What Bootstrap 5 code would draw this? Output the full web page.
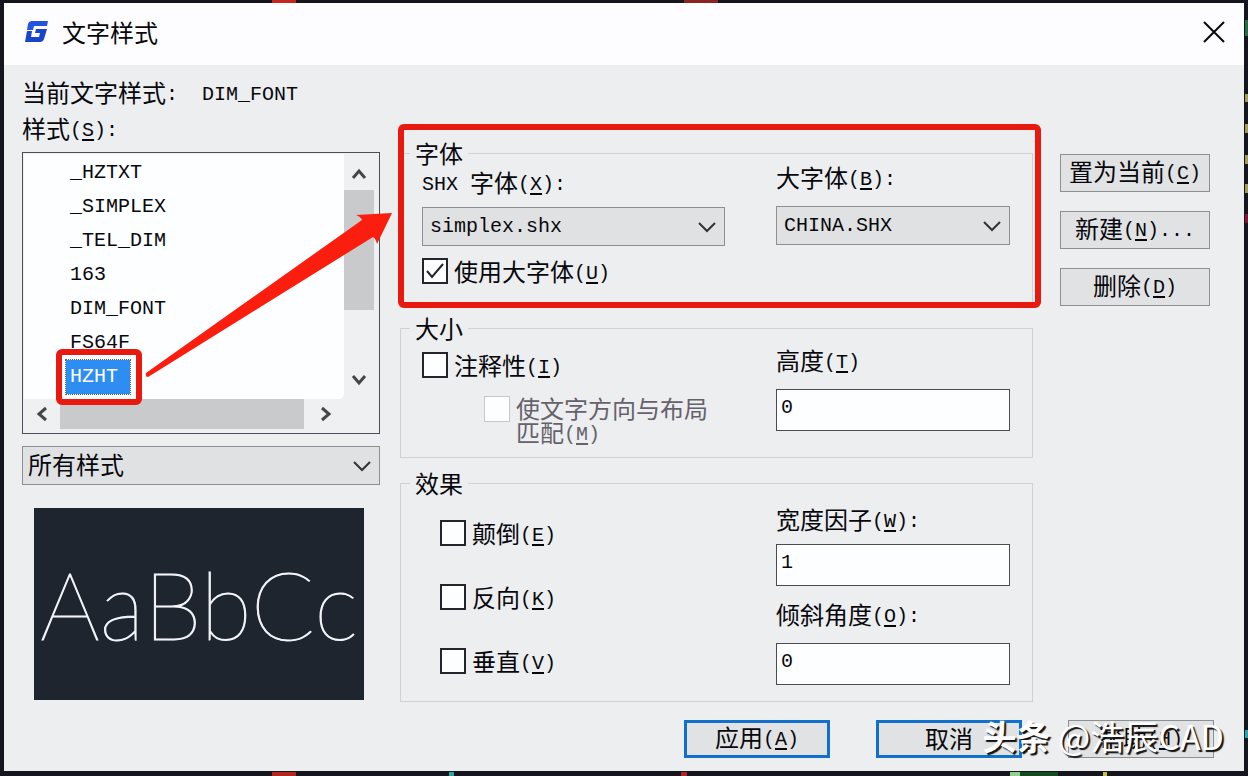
<!DOCTYPE html>
<html lang="zh-CN">
<head>
<meta charset="utf-8">
<meta name="viewport" content="width=device-width, initial-scale=1">
<title>文字样式</title>
<link href="https://cdn.jsdelivr.net/npm/bootstrap@5.3.0/dist/css/bootstrap.min.css" rel="stylesheet">
<style>
:root{--cjk:"Noto Sans CJK SC",sans-serif;--mono:"Liberation Mono","Noto Sans CJK SC",monospace;--mark-red:#e8190f}
body{padding:3px 4px 4px;color:#08080c;font:24px/24px var(--cjk);min-height:100vh;
 background:
 linear-gradient(#c3271f,#c3271f) 272px 0/24px 3px no-repeat,
 linear-gradient(#8b2420,#8b2420) 684px 0/34px 3px no-repeat,
 linear-gradient(#b32521,#b32521) 272px 100%/24px 4px no-repeat,
 linear-gradient(#2aa5a0,#2aa5a0) 449px 100%/5px 4px no-repeat,
 linear-gradient(#b32521,#b32521) 681px 100%/6px 4px no-repeat,
 linear-gradient(#8fd08f,#8fd08f) 1010px 100%/10px 4px no-repeat,
 linear-gradient(#144a22,#144a22) 1020px 100%/38px 4px no-repeat,
 linear-gradient(#c9c03c,#c9c03c) 1103px 100%/4px 4px no-repeat,
 linear-gradient(#2f6a45,#2f6a45) 100% 20px/3px 16px no-repeat,
 linear-gradient(#a59a5d,#a59a5d) 100% 94px/3px 8px no-repeat,
 linear-gradient(#a59a5d,#a59a5d) 100% 124px/3px 9px no-repeat,
 linear-gradient(#a59a5d,#a59a5d) 100% 155px/3px 9px no-repeat,
 linear-gradient(#a59a5d,#a59a5d) 100% 184px/3px 9px no-repeat,
 linear-gradient(#7d1734,#7d1734) 100% 214px/3px 9px no-repeat,
 linear-gradient(#2aa5b0,#2aa5b0) 100% 730px/3px 8px no-repeat,
 #15151d}
.dialog-window{background:#eceef0;min-height:calc(100vh - 8px)}
.title-strip{background:#fdfdff;height:62px;padding:0 18px 4px 20px}
.title-strip span{margin-left:12px}
.close-x{width:24px;height:24px;border:0;padding:0;background:none;display:flex}
.lat{font:20px/20px var(--mono);white-space:pre;vertical-align:2px}
u{text-underline-offset:3px;text-decoration-thickness:2px}
.content-pad{padding:9px 34px 0 18px}
.text-row{line-height:36px;white-space:nowrap}
.left-side{width:358px;flex:none}
.middle{padding:31px 0 0;flex:1 1 0;min-width:0;margin-left:20px}
.right-side{width:150px;flex:none;margin-left:27px;padding-top:44px;gap:19px}
.list-frame{border:1px solid #4a4f5c;margin-top:6px;height:282px;padding:1px 5px 4px 1px;display:grid;grid-template:1fr 30px/1fr 30px;background:#eff0f2}
.style-list{background:#fdfeff;border-radius:0 0 5px 0;padding-top:2px}
.style-list li{height:34px;line-height:34px;padding-left:46px;font-family:var(--mono);font-size:20px}
.chosen{display:inline-block;position:relative;background:#2d8df0;color:#fff;outline:1px dotted #4a6276;width:64px;height:34px;padding-left:4px;margin-left:-4px;vertical-align:top}
.chosen::after{content:"";position:absolute;inset:-11px -12px -11px -10px;border:6px solid var(--mark-red);border-radius:6px}
.thumb{background:#c9cacc}
.bar-v{display:flex;flex-direction:column;align-items:center}
.bar-v .thumb{width:30px;height:120px}
.bar-v svg{margin:12px 0 8px}
.bar-v svg:last-child{margin:auto 0 11px}
.bar-h{display:flex;align-items:center}
.bar-h .thumb{width:244px;height:30px}
.bar-h svg{margin:0 10px;flex:none}
.bar-h svg:last-child{margin-left:14px}
.arrow-art{position:absolute;left:118px;top:52px;width:260px;height:180px;pointer-events:none;z-index:2}
.drop{appearance:none;width:100%;height:39px;border:1px solid #8d8f92;border-radius:0;color:#08080c;padding:0 40px 0 7px;font:20px/24px var(--mono);display:block;
 background:url("data:image/svg+xml,%3Csvg xmlns='http://www.w3.org/2000/svg' viewBox='0 0 18 12'%3E%3Cpath d='M1 2l8 8 8-8' fill='none' stroke='%23333' stroke-width='2'/%3E%3C/svg%3E") right 8px center/18px 12px no-repeat,#e0e1e2}
.drop-cjk{font:24px/28px var(--cjk);padding:0 40px 3px 5px;margin-top:12px}
.preview{background:#1e252f;color:#f2f4f8;margin:23px 16px 0 12px;height:192px;display:flex;align-items:center;justify-content:center;font:100 94px/120px Lato,sans-serif;-webkit-text-stroke:1px #f2f4f8}
.group-box{border:1px solid #cfd2d5;padding:0 22px 0 21px;margin:0}
.group-box legend{float:none;width:auto;font-size:24px;line-height:24px;margin:0 0 0 -12px;padding:0 5px}
.pair{display:grid;grid-template-columns:minmax(0,1fr) 234px;column-gap:51px}
.pair label{display:block}
.group-font{position:relative;height:162px}
.group-font::after{content:"";position:absolute;inset:-41px -9px -6px -3px;border:6px solid var(--mark-red);border-radius:6px;pointer-events:none}
.group-size{margin-top:13px;height:142px}
.group-effect{margin-top:13px;height:231px}
.gap-5px{margin-top:5px}
.gap-12px{margin-top:12px}
.tick{appearance:none;flex:none;width:26px;height:26px;margin:0 6px 0 0;border:2px solid #24242c;background:#fdfeff}
.tick:checked{background:#fdfeff url("data:image/svg+xml,%3Csvg xmlns='http://www.w3.org/2000/svg' viewBox='0 0 22 22'%3E%3Cpath d='M3 11l5 6L19 4' fill='none' stroke='%2324242c' stroke-width='2'/%3E%3C/svg%3E") center/22px no-repeat}
.tick:disabled{border:1px solid #c6c8cb}
.tick-row{display:flex;align-items:center;height:26px;white-space:nowrap}
.tick-sub{display:flex;color:#66616b;padding-left:62px;margin-top:18px}
.tick-sub label{white-space:nowrap}
.tick-stack{display:grid;align-content:start;gap:38px;padding:25px 0 0 18px}
.entry{display:block;width:100%;height:42px;border:1px solid #4a4b50;border-radius:0;background:#fdfeff;color:#08080c;font:20px/24px var(--mono);padding:0 4px 6px}
.side-btn,.foot-btn{height:38px;border:1px solid #8d8f92;border-radius:0;background:#e1e2e3;color:#08080c;font:24px/24px var(--cjk);padding:0 0 3px;white-space:nowrap}
.foot-btn{width:146px}
.foot-main{border:3px solid #1170cc}
.foot{margin:18px 30px 0 0;display:flex;justify-content:flex-end;gap:46px;position:relative}
.stamp{position:absolute;right:-10px;top:-5px;color:#fff;font-size:34px;line-height:42px;white-space:nowrap;text-shadow:2px 2px 1px #111;pointer-events:none}
</style>
</head>
<body>
<main class="dialog-window">
 <header class="title-strip d-flex align-items-center">
  <svg width="26" height="24" viewBox="0 0 26 24" aria-hidden="true"><path d="M8 1H24L23 6H10L9 10H3L4 4Q5 1 8 1Z" fill="#2453df"/><path d="M12 9H23L20 19Q19 22 16 22H1L3 11H8L7 17H15L16 13H11Z" fill="#1745ce"/></svg>
  <span>文字样式</span>
  <button class="close-x ms-auto" type="button" aria-label="关闭"><svg width="24" height="24" viewBox="0 0 24 24"><path d="M2 2L22 22M22 2L2 22" stroke="#08080c" stroke-width="2"/></svg></button>
 </header>
 <div class="content-pad">
  <div class="text-row">当前文字样式<span class="lat">:  DIM_FONT</span></div>
  <div class="d-flex">
   <section class="left-side">
    <div class="text-row" id="styles">样式<span class="lat">(<u>S</u>):</span></div>
    <div class="list-frame position-relative">
     <ul class="style-list list-unstyled m-0" role="listbox" aria-labelledby="styles">
      <li role="option">_HZTXT</li><li role="option">_SIMPLEX</li><li role="option">_TEL_DIM</li><li role="option">163</li><li role="option">DIM_FONT</li><li role="option">FS64F</li><li role="option" aria-selected="true"><span class="chosen">HZHT</span></li>
     </ul>
     <div class="bar-v">
      <svg width="16" height="16" viewBox="0 0 16 16"><path d="M2 12L8 5L14 12" fill="none" stroke="#45464a" stroke-width="3"/></svg>
      <div class="thumb"></div>
      <svg width="16" height="16" viewBox="0 0 16 16"><path d="M2 4L8 11L14 4" fill="none" stroke="#45464a" stroke-width="3"/></svg>
     </div>
     <div class="bar-h">
      <svg width="16" height="16" viewBox="0 0 16 16"><path d="M12 2L5 8L12 14" fill="none" stroke="#45464a" stroke-width="3"/></svg>
      <div class="thumb"></div>
      <svg width="16" height="16" viewBox="0 0 16 16"><path d="M4 2L11 8L4 14" fill="none" stroke="#45464a" stroke-width="3"/></svg>
     </div>
     <svg class="arrow-art" viewBox="0 0 260 180" aria-hidden="true"><path d="M5 168L221 15Q220 12 215 10L251 8L236 39Q235 34 232 32L7 172Q4 172 5 168Z" fill="#fb1d0d"/></svg>
    </div>
    <select class="drop drop-cjk" aria-label="样式过滤"><option>所有样式</option></select>
    <div class="preview">AaBbCc</div>
   </section>
   <section class="middle">
    <fieldset class="group-box group-font">
     <legend>字体</legend>
     <div class="pair">
      <div>
       <label class="gap-5px" for="shx"><span class="lat">SHX </span>字体<span class="lat">(<u>X</u>):</span></label>
       <select class="drop gap-12px" id="shx"><option>simplex.shx</option></select>
       <div class="tick-row gap-12px"><input class="tick" type="checkbox" id="big" checked><label for="big">使用大字体<span class="lat">(<u>U</u>)</span></label></div>
      </div>
      <div>
       <label for="bigfont">大字体<span class="lat">(<u>B</u>):</span></label>
       <select class="drop gap-12px mt-3" id="bigfont"><option>CHINA.SHX</option></select>
      </div>
     </div>
    </fieldset>
    <fieldset class="group-box group-size">
     <legend>大小</legend>
     <div class="pair">
      <div>
       <div class="tick-row gap-12px"><input class="tick" type="checkbox" id="anno"><label for="anno">注释性<span class="lat">(<u>I</u>)</span></label></div>
       <div class="tick-sub"><input class="tick" type="checkbox" id="match" disabled><label for="match">使文字方向与布局<br>匹配<span class="lat">(<u>M</u>)</span></label></div>
      </div>
      <div>
       <label class="mt-2" for="height">高度<span class="lat">(<u>T</u>)</span></label>
       <input class="entry mt-3" id="height" value="0">
      </div>
     </div>
    </fieldset>
    <fieldset class="group-box group-effect">
     <legend>效果</legend>
     <div class="pair">
      <div class="tick-stack">
       <div class="tick-row"><input class="tick" type="checkbox" id="flip"><label for="flip">颠倒<span class="lat">(<u>E</u>)</span></label></div>
       <div class="tick-row"><input class="tick" type="checkbox" id="back"><label for="back">反向<span class="lat">(<u>K</u>)</span></label></div>
       <div class="tick-row"><input class="tick" type="checkbox" id="vert"><label for="vert">垂直<span class="lat">(<u>V</u>)</span></label></div>
      </div>
      <div>
       <label class="gap-12px" for="width">宽度因子<span class="lat">(<u>W</u>):</span></label>
       <input class="entry gap-12px" id="width" value="1">
       <label class="mt-3" for="slant">倾斜角度<span class="lat">(<u>O</u>):</span></label>
       <input class="entry mt-3" id="slant" value="0">
      </div>
     </div>
    </fieldset>
   </section>
   <aside class="right-side d-flex flex-column">
    <button class="side-btn" type="button">置为当前<span class="lat">(<u>C</u>)</span></button>
    <button class="side-btn" type="button">新建<span class="lat">(<u>N</u>)...</span></button>
    <button class="side-btn" type="button">删除<span class="lat">(<u>D</u>)</span></button>
   </aside>
  </div>
 </div>
 <footer class="foot">
  <button class="foot-btn foot-main" type="button">应用<span class="lat">(<u>A</u>)</span></button>
  <button class="foot-btn foot-main" type="button">取消</button>
  <button class="foot-btn" type="button">帮助<span class="lat">(<u>H</u>)</span></button>
  <div class="stamp"><b>头条</b> @浩辰CAD</div>
 </footer>
</main>
<script src="https://cdn.jsdelivr.net/npm/bootstrap@5.3.0/dist/js/bootstrap.bundle.min.js"></script>
</body>
</html>
